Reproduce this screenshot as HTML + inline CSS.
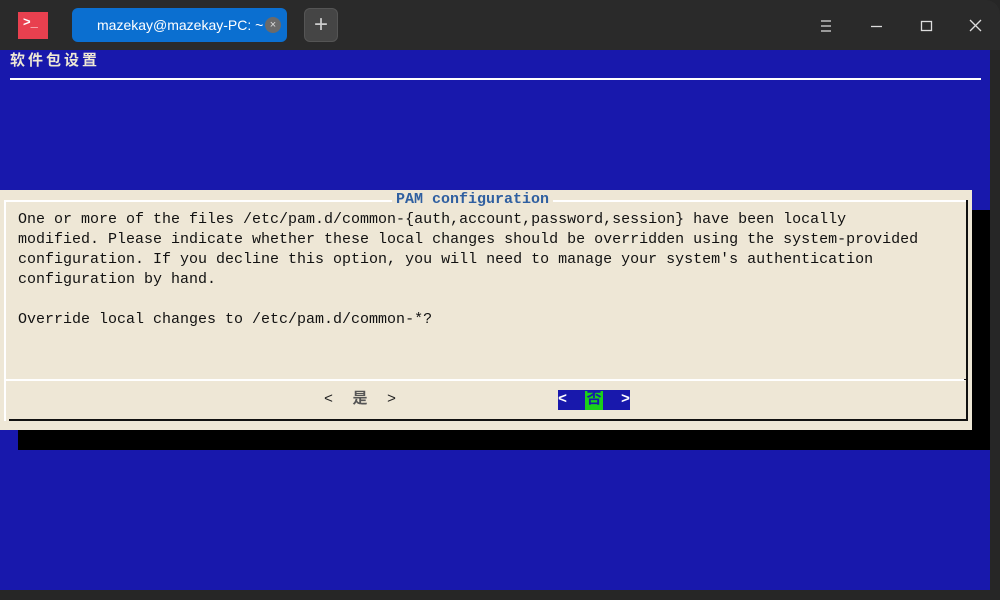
<!DOCTYPE html>
<html><head><meta charset="utf-8"><style>
*{margin:0;padding:0;box-sizing:border-box}
body{width:1000px;height:600px;background:#262626;position:relative;overflow:hidden;font-family:"Liberation Mono","Noto Sans CJK SC",monospace}
.a{position:absolute}
.term{left:0;top:50px;width:990px;height:540px;background:#1818ac}
.txt{font-size:15px;line-height:20px;color:#111;white-space:pre;letter-spacing:0}
.cj{display:inline-block;width:18px;text-align:center}
</style></head><body>
<div class="a" style="left:0;top:0;width:1000px;height:50px;background:#2a2a2a;border-radius:0 14px 0 0"></div>
<div class="a" style="left:18px;top:12px;width:30px;height:27px;background:#e8404f;color:#fff;font:bold 13px 'Liberation Sans',sans-serif;padding:2px 0 0 5px">&gt;_</div>
<div class="a" style="left:72px;top:8px;width:215px;height:34px;background:#0b6fd0;border-radius:6px;color:#fff;font:14px 'Liberation Sans','DejaVu Sans',sans-serif;line-height:34px;padding-left:25px;white-space:nowrap">mazekay@mazekay-PC: ~</div>
<div class="a" style="left:265px;top:17px;width:16px;height:16px;border-radius:50%;background:#6a6a6a;color:#ddd;font:11px 'Liberation Sans',sans-serif;text-align:center;line-height:16px">×</div>
<div class="a" style="left:304px;top:8px;width:34px;height:34px;background:#454545;border-radius:6px;border:1px solid #555;color:#ccc;font:24px 'Liberation Sans',sans-serif;text-align:center;line-height:31px">+</div>
<svg class="a" style="left:800px;top:0" width="200" height="50" stroke="#ddd" stroke-width="1.3" fill="none">
<path d="M21 21h10M21 26h10M21 31h10"/><path d="M71 26.5h11"/><rect x="121.5" y="21.5" width="10" height="9"/><path d="M170 20l11 11M181 20l-11 11"/></svg>
<div class="term a"></div>
<div class="a" style="left:10px;top:52px;color:#eee8d5;font:bold 15px 'Liberation Mono','Noto Sans CJK SC',monospace;line-height:20px;letter-spacing:3px">软件包设置</div>
<div class="a" style="left:10px;top:78px;width:971px;height:2px;background:#fff"></div>
<div class="a" style="left:18px;top:430px;width:972px;height:20px;background:#000"></div>
<div class="a" style="left:972px;top:210px;width:18px;height:240px;background:#000"></div>
<div class="a" style="left:0;top:190px;width:972px;height:240px;background:#eee7d6"></div>
<div class="a" style="left:4px;top:200px;width:2px;height:221px;background:#fff"></div>
<div class="a" style="left:4px;top:200px;width:964px;height:2px;background:#fff"></div>
<div class="a" style="left:966px;top:200px;width:2px;height:221px;background:#111"></div>
<div class="a" style="left:9px;top:419px;width:959px;height:2px;background:#111"></div>
<div class="a" style="left:5px;top:379px;width:960px;height:2px;background:#fff"></div>
<div class="a" style="left:964px;top:379px;width:4px;height:1px;background:#111"></div>
<div class="a txt" style="left:392px;top:190px;padding:0 4px;background:#eee7d6;color:#2f5fa0;font-weight:bold">PAM configuration</div>
<div class="a txt" style="left:18px;top:210px">One or more of the files /etc/pam.d/common-{auth,account,password,session} have been locally
modified. Please indicate whether these local changes should be overridden using the system-provided
configuration. If you decline this option, you will need to manage your system's authentication
configuration by hand.

Override local changes to /etc/pam.d/common-*?</div>
<div class="a txt" style="left:324px;top:390px;color:#222">&lt;  <span class="cj" style="color:#555;font-weight:bold">是</span>  &gt;</div>
<div class="a" style="left:558px;top:390px;width:72px;height:20px;background:#1818ac"></div>
<div class="a" style="left:585px;top:391px;width:18px;height:19px;background:#1ad01a"></div>
<div class="a txt" style="left:558px;top:390px;color:#fff;font-weight:bold">&lt;  <span class="cj" style="color:#1818ac">否</span>  &gt;</div>
</body></html>
